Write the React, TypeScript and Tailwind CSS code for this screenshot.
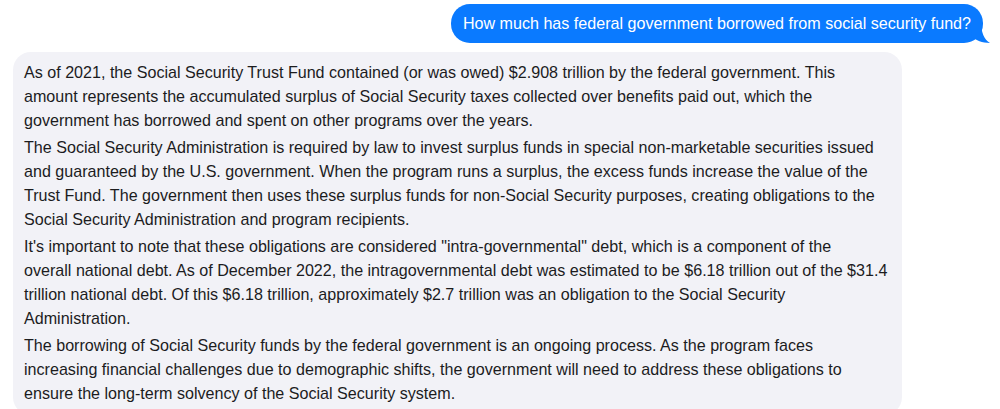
import React from "react";

const paras: string[][] = [
  [
    "As of 2021, the Social Security Trust Fund contained (or was owed) $2.908 trillion by the federal government. This",
    "amount represents the accumulated surplus of Social Security taxes collected over benefits paid out, which the",
    "government has borrowed and spent on other programs over the years.",
  ],
  [
    "The Social Security Administration is required by law to invest surplus funds in special non-marketable securities issued",
    "and guaranteed by the U.S. government. When the program runs a surplus, the excess funds increase the value of the",
    "Trust Fund. The government then uses these surplus funds for non-Social Security purposes, creating obligations to the",
    "Social Security Administration and program recipients.",
  ],
  [
    "It's important to note that these obligations are considered \"intra-governmental\" debt, which is a component of the",
    "overall national debt. As of December 2022, the intragovernmental debt was estimated to be $6.18 trillion out of the $31.4",
    "trillion national debt. Of this $6.18 trillion, approximately $2.7 trillion was an obligation to the Social Security",
    "Administration.",
  ],
  [
    "The borrowing of Social Security funds by the federal government is an ongoing process. As the program faces",
    "increasing financial challenges due to demographic shifts, the government will need to address these obligations to",
    "ensure the long-term solvency of the Social Security system.",
  ],
];

export default function App() {
  return (
    <div
      className="w-[1000px] h-[409px] overflow-hidden bg-white flex flex-col text-[#1c1c1e]"
      style={{ fontFamily: '"Liberation Sans", Arial, sans-serif' }}
    >
      <div className="flex justify-end pt-[4px] pr-[17px]">
        <div className="relative h-[39px] px-[12px] rounded-[19px] bg-[#0a7aff] text-white text-[16.1px] flex items-center">
          How much has federal government borrowed from social security fund?
          <svg
            className="absolute right-[-7px] bottom-0"
            width="20"
            height="20"
            viewBox="0 0 20 20"
          >
            <path d="M0 0 L11 0 C11 8 14 17 20 20 C12 20 6 17 2 14 Z" fill="#0a7aff" />
          </svg>
        </div>
      </div>
      <div className="mt-[9px] ml-[13px] w-[889px] rounded-[18px] bg-[#f2f2f7] pt-[8px] pb-[10px] px-[11px] text-[16.1px] leading-[24px] flex flex-col gap-[3px]">
        {paras.map((p, i) => (
          <p key={i} className="whitespace-nowrap">
            {p.map((line, j) => (
              <span key={j} className="block">
                {line}
              </span>
            ))}
          </p>
        ))}
      </div>
    </div>
  );
}
